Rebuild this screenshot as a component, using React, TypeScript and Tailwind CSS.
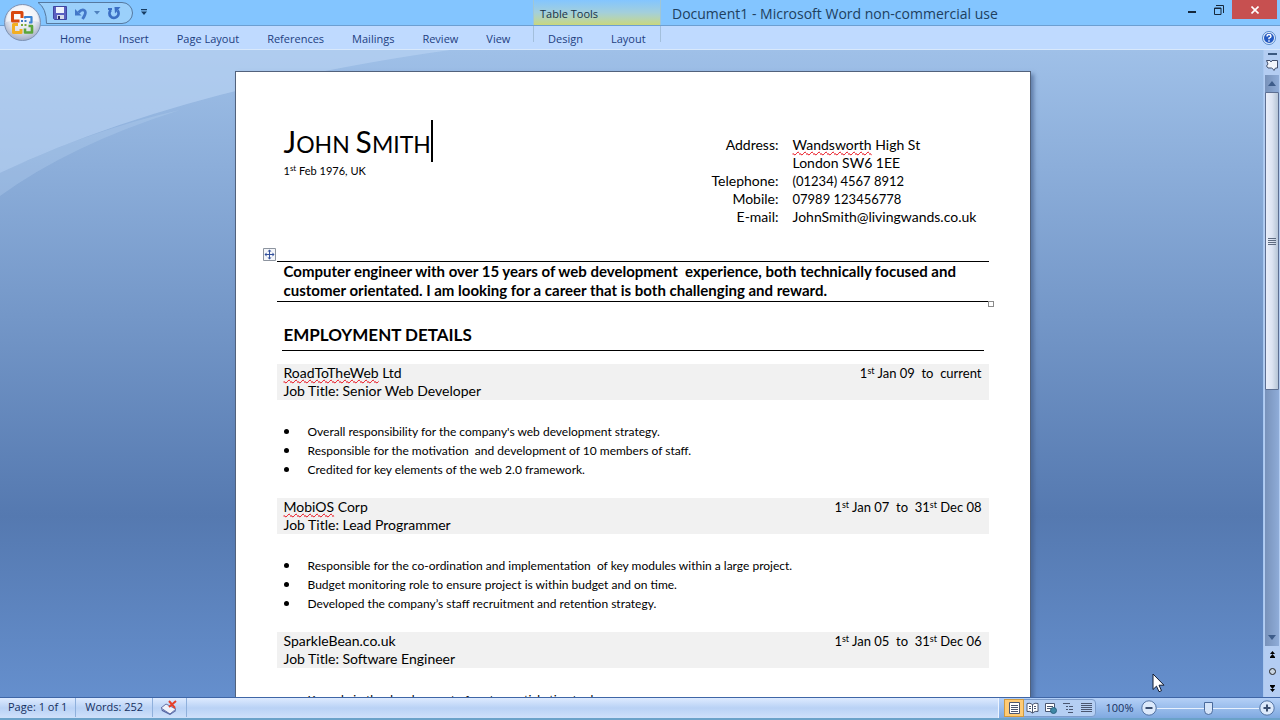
import { useState, type ReactNode } from "react";

const TABS = ["Home", "Insert", "Page Layout", "References", "Mailings", "Review", "View"];

type Job = { company: ReactNode; title: string; dates: ReactNode; points: string[] };

const Typo = ({ children }: { children: ReactNode }) => (
  <span className="underline decoration-red-600 decoration-wavy decoration-1 underline-offset-1 [text-decoration-skip-ink:none]">{children}</span>
);

const Sup = ({ children }: { children: ReactNode }) => (
  <sup className="text-[9px] leading-none">{children}</sup>
);

const JOBS: Job[] = [
  {
    company: <><Typo>RoadToTheWeb</Typo> Ltd</>,
    title: "Senior Web Developer",
    dates: <>1<Sup>st</Sup> Jan 09  to  current</>,
    points: [
      "Overall responsibility for the company's web development strategy.",
      "Responsible for the motivation  and development of 10 members of staff.",
      "Credited for key elements of the web 2.0 framework.",
    ],
  },
  {
    company: <><Typo>MobiOS</Typo> Corp</>,
    title: "Lead Programmer",
    dates: <>1<Sup>st</Sup> Jan 07  to  31<Sup>st</Sup> Dec 08</>,
    points: [
      "Responsible for the co-ordination and implementation  of key modules within a large project.",
      "Budget monitoring role to ensure project is within budget and on time.",
      "Developed the company’s staff recruitment and retention strategy.",
    ],
  },
  {
    company: "SparkleBean.co.uk",
    title: "Software Engineer",
    dates: <>1<Sup>st</Sup> Jan 05  to  31<Sup>st</Sup> Dec 06</>,
    points: ["Key role in the development of customer ticketing tool."],
  },
];

const CONTACT: [string, ReactNode][] = [
  ["Address:", <><Typo>Wandsworth</Typo> High St</>],
  ["", "London SW6 1EE"],
  ["Telephone:", <span className="text-[13px]">(01234) 4567 8912</span>],
  ["Mobile:", <span className="text-[13px]">07989 123456778</span>],
  ["E-mail:", "JohnSmith@livingwands.co.uk"],
];

function OfficeButton() {
  return (
    <button aria-label="Office Button" className="absolute left-1 top-1 z-10 size-[37px]">
      <svg viewBox="0 0 37 37" className="size-full">
        <defs>
          <radialGradient id="orb" cx="50%" cy="35%" r="65%">
            <stop offset="0" stopColor="#ffffff" />
            <stop offset=".6" stopColor="#dfe3ee" />
            <stop offset="1" stopColor="#a3adc4" />
          </radialGradient>
        </defs>
        <circle cx="18.500" cy="18.500" r="18" fill="url(#orb)" stroke="#7c92b4" />
        <path d="M2 18a16.500 16.500 0 0 1 33 0q-16-5-33 0Z" fill="#fff" opacity=".55" />
        <g fill="none" strokeWidth="3" strokeLinejoin="round">
          <path d="M15.500 17H8.500V8.500h9.500V14" stroke="#d9480f" />
          <path d="M21 14.500v-1.500h6.500v5.500H25" stroke="#3b83d1" strokeWidth="2.200" />
          <path d="M14 20.500H9.500v8h7.500V25" stroke="#f2ae22" />
          <path d="M21 24.500v4h7v-6.500h-3.500" stroke="#5ba53a" strokeWidth="2.600" />
        </g>
        <g fill="#3b77c4">
          <rect x="17" y="16" width="2" height="2" /><rect x="20.500" y="16" width="2" height="2" />
        </g>
        <g fill="#7aa63a">
          <rect x="17" y="20" width="2" height="2" /><rect x="20.500" y="20" width="2" height="2" />
        </g>
      </svg>
    </button>
  );
}

function QuickAccess() {
  return (
    <div className="flex items-start pl-9 pt-0.5">
      <div className="relative flex h-[22px] w-[97px] items-center pl-[17px]">
        <svg viewBox="0 0 97 22" className="absolute inset-0 size-full" fill="none">
          <path d="M2 .5h84a10.500 10.500 0 0 1 0 21H10.500Q10.500 6 2 .5Z" fill="#9bd0fb" stroke="#56799f" />
        </svg>
        <button aria-label="Save" className="relative">
          <svg width="14" height="14" viewBox="0 0 14 14">
            <path d="M.5.5h13v13h-12l-1-1Z" fill="#5a5fc0" stroke="#3f45a0" />
            <path d="M3 1h8v6H3Z" fill="#eef2fc" />
            <path d="M4 9h7v4H4Z" fill="#d5daea" />
            <path d="M5 10h2v3H5Z" fill="#272c66" />
          </svg>
        </button>
        <button aria-label="Undo" className="relative ml-2">
          <svg width="13" height="13" viewBox="0 0 13 13" fill="none">
            <path d="M3.500 5.500q3.500-4 6-2T7.500 12" stroke="#4377c8" strokeWidth="2.800" />
            <path d="M0 2v6.500h6.500Z" fill="#4377c8" />
          </svg>
        </button>
        <button aria-label="Undo history" className="relative ml-1.5">
          <svg width="6" height="4" viewBox="0 0 6 4"><path d="M0 0h6L3 3.500Z" fill="#4f81bd" /></svg>
        </button>
        <button aria-label="Repeat" className="relative ml-2">
          <svg width="13" height="13" viewBox="0 0 13 13" fill="none">
            <path d="M3 3a4.500 4.500 0 1 0 6.500.5" stroke="#3b6fc4" strokeWidth="2.800" />
            <path d="M6.500 0H12.500L7 6.500Z" fill="#3b6fc4" />
            <path d="M0 1h4v2H0Z" fill="#3b6fc4" />
          </svg>
        </button>
      </div>
      <button aria-label="Customize Quick Access Toolbar" className="ml-2 mt-[7px]">
        <svg width="6" height="6" viewBox="0 0 6 6" fill="#173d63"><path d="M0 0h6v1.200H0ZM0 2.500h6L3 6Z" /></svg>
      </button>
    </div>
  );
}

function TitleBar() {
  return (
    <div className="flex h-[26px] border-b border-[#6c9fd2] bg-[#83c5ff]">
      <div className="w-[533px]"><QuickAccess /></div>
      <div className="w-[128px] border-x border-[#9fc6d6] bg-linear-to-b from-[#83c5ff] via-[#a3cfdb] to-[#c9d77c] pl-1.5 text-[11px] leading-[28px] text-[#173248]">
        Table Tools
      </div>
      <h1 className="flex-1 pl-[11px] text-[14px] leading-[27px] text-[#20405e]">
        Document1 - Microsoft Word non-commercial use
      </h1>
      <div className="flex h-[19px] items-start">
        <button aria-label="Minimize" className="flex h-[19px] w-[27px] items-center justify-center pt-1">
          <span className="h-0.5 w-2 bg-[#15283c]" />
        </button>
        <button aria-label="Restore" className="flex h-[19px] w-[27px] items-center justify-center">
          <svg width="10" height="10" viewBox="0 0 10 10" fill="none" stroke="#15283c">
            <path d="M2 .5h7.500V8" /><path d="M.5 3h6.500v6.500H.5ZM.5 3.500h6.500" />
          </svg>
        </button>
        <button aria-label="Close" className="mr-[3px] flex h-[19px] w-[45px] items-center justify-center bg-[#c75050]">
          <svg width="8" height="8" viewBox="0 0 8 8" stroke="#fff" strokeWidth="1.600"><path d="m.5.5 7 7m0-7-7 7" /></svg>
        </button>
      </div>
    </div>
  );
}

function Ribbon() {
  const tab = "px-[14px] text-[11px] leading-[26px] text-[#1d407f]";
  return (
    <nav className="flex h-6 border-b border-[#d8e8fb] bg-[#bfdaff]">
      <div className="flex w-[533px] pl-[46px]">
        {TABS.map((t) => <button key={t} className={tab}>{t}</button>)}
      </div>
      <div className="flex w-[128px]">
        <span className="h-4 w-px bg-[#a3bfdc]" />
        <button className={tab}>Design</button>
        <button className={tab}>Layout</button>
        <span className="ml-auto h-4 w-px bg-[#a3bfdc]" />
      </div>
      <button aria-label="Help" className="ml-auto mr-1 self-center">
        <svg width="14" height="14" viewBox="0 0 14 14">
          <circle cx="7" cy="7" r="6.500" fill="#e4effc" stroke="#5588ca" />
          <circle cx="7" cy="7" r="5" fill="#2459c2" />
          <path d="M5 5.500q0-2 2-2t2 1.700Q9 6.300 7 7.200V8.300M7 9.300v1.500" stroke="#fff" strokeWidth="1.400" fill="none" />
        </svg>
      </button>
    </nav>
  );
}

function Resume() {
  return (
    <article className="relative mx-auto w-[796px] border-x border-t border-[#52627c] bg-white px-[41px] pb-24 pt-12 font-[Lato,Carlito,sans-serif] text-[14px] leading-[18px] text-black shadow-[3px_3px_4px_#3d588699]">
      <header className="flex h-[141px] justify-between pl-[7px] pr-[14px]">
        <div>
          <h2 className="flex h-[42px] items-baseline border-r-2 border-black text-[23px] leading-[42px]">
            <span className="whitespace-pre"><span className="text-[30px]">J</span>OHN <span className="text-[30px]">S</span>MITH</span>
          </h2>
          <p className="text-[11px]">1<sup className="text-[8px] leading-none">st</sup> Feb 1976, UK</p>
        </div>
        <dl className="mt-4 grid auto-rows-[18px] grid-cols-[auto_182px] gap-x-[14px]">
          {CONTACT.map(([k, v], i) => (
            <div key={i} className="contents">
              <dt className="text-right">{k}</dt>
              <dd className="whitespace-pre">{v}</dd>
            </div>
          ))}
        </dl>
      </header>

      <section className="relative border-y border-black px-[7px] pb-px text-[15px] font-bold leading-[19px]">
        <svg className="absolute -left-[14px] -top-[14px]" width="13" height="13" viewBox="0 0 13 13">
          <path d="M.5.5h12v12H.5Z" fill="#f4f6fa" stroke="#8d949f" />
          <path d="M6.500 2v9M2 6.500h9" stroke="#33509c" />
          <path d="m6.500 1.500 2 2h-4Zm0 10 2-2h-4Zm-5-5 2-2v4Zm10 0-2-2v4Z" fill="#33509c" />
        </svg>
        <p className="whitespace-pre">{"Computer engineer with over 15 years of web development  experience, both technically focused and\ncustomer orientated. I am looking for a career that is both challenging and reward."}</p>
        <span className="absolute -bottom-[6px] -right-[5px] size-[6px] border border-[#8a8a8a] bg-white" />
      </section>

      <h3 className="ml-[5px] mr-[5px] mt-5 border-b border-black pb-0.5 pl-0.5 text-[17px] font-bold leading-[26px]">
        EMPLOYMENT DETAILS
      </h3>

      <div className="pt-[13px]">
        {JOBS.map((job) => (
          <section key={job.title} className="mb-[19px]">
            <div className="flex justify-between whitespace-pre bg-[#f1f1f1] px-[7px]">
              <div>
                <p>{job.company}</p>
                <p>Job Title: {job.title}</p>
              </div>
              <p className="text-[13px]">{job.dates}</p>
            </div>
            <ul className="mt-[22px] pl-[7px] text-[12px] leading-[19px]">
              {job.points.map((p) => (
                <li key={p} className="flex items-center gap-[19px] whitespace-pre">
                  <span className="size-[5px] rounded-full bg-black" />
                  {p}
                </li>
              ))}
            </ul>
          </section>
        ))}
      </div>
    </article>
  );
}

function ScrollBar() {
  return (
    <div className="flex w-[17px] flex-col items-center border-l border-[#a9c8f0] bg-[#b4cdf2]">
      <span className="mt-[3px] h-0.5 w-[9px] bg-[#3b587f]" />
      <button aria-label="View Ruler" className="mb-1 mt-1">
        <svg width="12" height="12" viewBox="0 0 12 12" fill="#f2f5fb" stroke="#43506c">
          <path d="M.5 1.500H4L5 3l1-1.500h5.500V9H9.500L8 11.500 6.500 9.500l-1-.5H2L.5 7l1.500-2Z" />
        </svg>
      </button>
      <div className="flex w-[14px] flex-1 flex-col bg-linear-to-r from-[#7892ba] to-[#8facd8]">
        <button aria-label="Scroll up" className="flex h-[17px] items-center justify-center">
          <svg width="8" height="5" viewBox="0 0 8 5"><path d="m4 0 4 5H0Z" fill="#3d5c8a" /></svg>
        </button>
        <div className="flex h-[298px] flex-col items-center justify-center gap-px rounded-[1px] border border-[#5d6f92] bg-linear-to-r from-[#e9eefa] via-[#dde4f2] to-[#b6c5d6]">
          {[0, 1, 2, 3].map((n) => <span key={n} className="h-px w-2 bg-[#5e6b80]" />)}
        </div>
        <button aria-label="Scroll down" className="mt-auto flex h-[17px] items-center justify-center">
          <svg width="8" height="5" viewBox="0 0 8 5"><path d="m4 5 4-5H0Z" fill="#3d5c8a" /></svg>
        </button>
      </div>
      <div className="flex h-[51px] flex-col items-center justify-around">
        <button aria-label="Previous Page"><svg width="5" height="7" viewBox="0 0 5 7"><path d="m2.500 0 2.500 3H0Zm0 3L5 6H0ZM0 6h5v1H0Z" /></svg></button>
        <button aria-label="Select Browse Object"><svg width="7" height="7" viewBox="0 0 7 7"><circle cx="3.500" cy="3.500" r="3" fill="#c8d4e0" stroke="#222" /></svg></button>
        <button aria-label="Next Page"><svg width="5" height="7" viewBox="0 0 5 7"><path d="m2.500 7 2.500-3H0Zm0-3L5 1H0ZM0 0h5v1H0Z" /></svg></button>
      </div>
    </div>
  );
}

const VIEWS: [string, ReactNode][] = [
  ["Print Layout", <><path d="M1.500.5h10v11h-10Z" fill="#fff" /><path d="M3 3.500h7M3 5.500h7M3 7.500h7M3 9.500h7" /></>],
  ["Full Screen Reading", <><path d="M1 1.500q3-1 5.500 1 2.500-2 5.500-1v8q-3-1-5.500 1.500Q4 8.500 1 9.500Zm5.500 1V11" fill="#fff" /><path d="M3 4.500h2M3 6.500h2M8 4.500h2M8 6.500h2" /></>],
  ["Web Layout", <><path d="M1.500 1.500h9v8h-9Z" fill="#fff" /><path d="M3 4.500h6M3 6.500h5" /><circle cx="9.500" cy="8.500" r="3" fill="#3e87a5" stroke="#2d6380" /></>],
  ["Outline", <path d="M1 1.500h7M4 4.500h2M7 4.500h4M4 7.500h2M7 7.500h4M6 10.500h5" />],
  ["Draft", <path d="M1 1.500h11M1 3.500h11M1 5.500h11M1 7.500h11M1 9.500h11" />],
];

function StatusBar() {
  const [zoom, setZoom] = useState(50);
  const [view, setView] = useState("Print Layout");
  const cell = "flex h-[19px] items-center border-r border-[#8fb0dc]";
  return (
    <footer className="flex h-[23px] items-start border-b-2 border-t border-b-[#6ba2c9] border-t-[#3f66a6] bg-linear-to-b from-[#deebff] via-[#b9d2f5] to-[#cfe0fa] text-[11px] text-[#16305f]">
      <button className={cell + " px-2"}>Page: 1 of 1</button>
      <button className={cell + " px-[9px]"}>Words: 252</button>
      <button aria-label="Proofing errors" className={cell + " px-2"}>
        <svg width="17" height="15" viewBox="0 0 17 15">
          <path d="m0 8 5-4 10 5-6 5Z" fill="#eef2fb" stroke="#6470a4" />
          <path d="m0 9 9 5 6-4v1l-6 4L1 11Z" fill="#5261a0" />
          <path d="m8 1 6 7m1-7L8 7" stroke="#e5402a" strokeWidth="2" />
        </svg>
      </button>
      <div className="ml-auto flex h-5 items-center border-l border-[#edf4ff] bg-linear-to-b from-[#b4d0f7] to-[#7fa9e0] pl-[5px] pr-[5px]">
        <div className="flex h-[18px] rounded-sm border border-[#7c9cca] bg-[#b5cff3]">
          {VIEWS.map(([name, icon]) => (
            <button
              key={name}
              aria-label={name}
              aria-pressed={view === name}
              onClick={() => setView(name)}
              className={view === name ? "flex w-[18px] items-center justify-center bg-[#ffcb74] ring-1 ring-[#d09a3f]" : "flex w-[18px] items-center justify-center"}
            >
              <svg width="13" height="12" viewBox="0 0 13 12" fill="none" stroke="#4a5670">{icon}</svg>
            </button>
          ))}
        </div>
        <button className="w-[43px] pl-1 text-center">100%</button>
        <button aria-label="Zoom Out" className="ml-0.5">
          <svg width="16" height="16" viewBox="0 0 16 16"><circle cx="8" cy="8" r="7.200" fill="#dce9fb" stroke="#5474a4" /><path d="M4.500 8h7" stroke="#3c4f70" strokeWidth="2" /></svg>
        </button>
        <input
          type="range"
          aria-label="Zoom"
          value={zoom}
          onChange={(e) => setZoom(Number(e.target.value))}
          className="h-4 w-[102px] appearance-none bg-transparent [&::-webkit-slider-runnable-track]:h-px [&::-webkit-slider-runnable-track]:bg-[#e7f0fd] [&::-webkit-slider-thumb]:-mt-1.5 [&::-webkit-slider-thumb]:h-[13px] [&::-webkit-slider-thumb]:w-[9px] [&::-webkit-slider-thumb]:appearance-none [&::-webkit-slider-thumb]:rounded-b-full [&::-webkit-slider-thumb]:border [&::-webkit-slider-thumb]:border-[#4a6a9c] [&::-webkit-slider-thumb]:bg-[#d5e4f9]"
        />
        <button aria-label="Zoom In">
          <svg width="16" height="16" viewBox="0 0 16 16"><circle cx="8" cy="8" r="7.200" fill="#dce9fb" stroke="#5474a4" /><path d="M4.500 8h7M8 4.500v7" stroke="#3c4f70" strokeWidth="2" /></svg>
        </button>
      </div>
    </footer>
  );
}

export default function App() {
  return (
    <div className="flex h-screen flex-col overflow-hidden font-['Open_Sans','Noto_Sans',sans-serif]">
      <div className="relative">
        <OfficeButton />
        <TitleBar />
        <Ribbon />
      </div>
      <div className="flex min-h-0 flex-1">
        <main className="relative flex-1 overflow-hidden bg-linear-to-b from-[#9fc0e8] from-0% via-[#5579b0] via-72% to-[#658fcd] to-100% pl-0.5 pt-[21px]">
          <svg className="absolute left-0 top-0" width="480" height="150" viewBox="0 0 480 150">
            <path d="M0 0h450Q180 38 0 123Z" fill="#b9d3f2" opacity=".65" />
            <path d="M0 123Q90 80 180 60Q70 95 0 146Z" fill="#b9d3f2" opacity=".3" />
          </svg>
          <Resume />
          <svg className="absolute bottom-1 right-[98px]" width="13" height="20" viewBox="0 0 13 20">
            <path d="M1 1v15.500l3.500-3.300 2.500 5.500 2.500-1-2.500-5.500h5Z" fill="#fff" stroke="#111c33" />
          </svg>
        </main>
        <ScrollBar />
      </div>
      <StatusBar />
    </div>
  );
}
